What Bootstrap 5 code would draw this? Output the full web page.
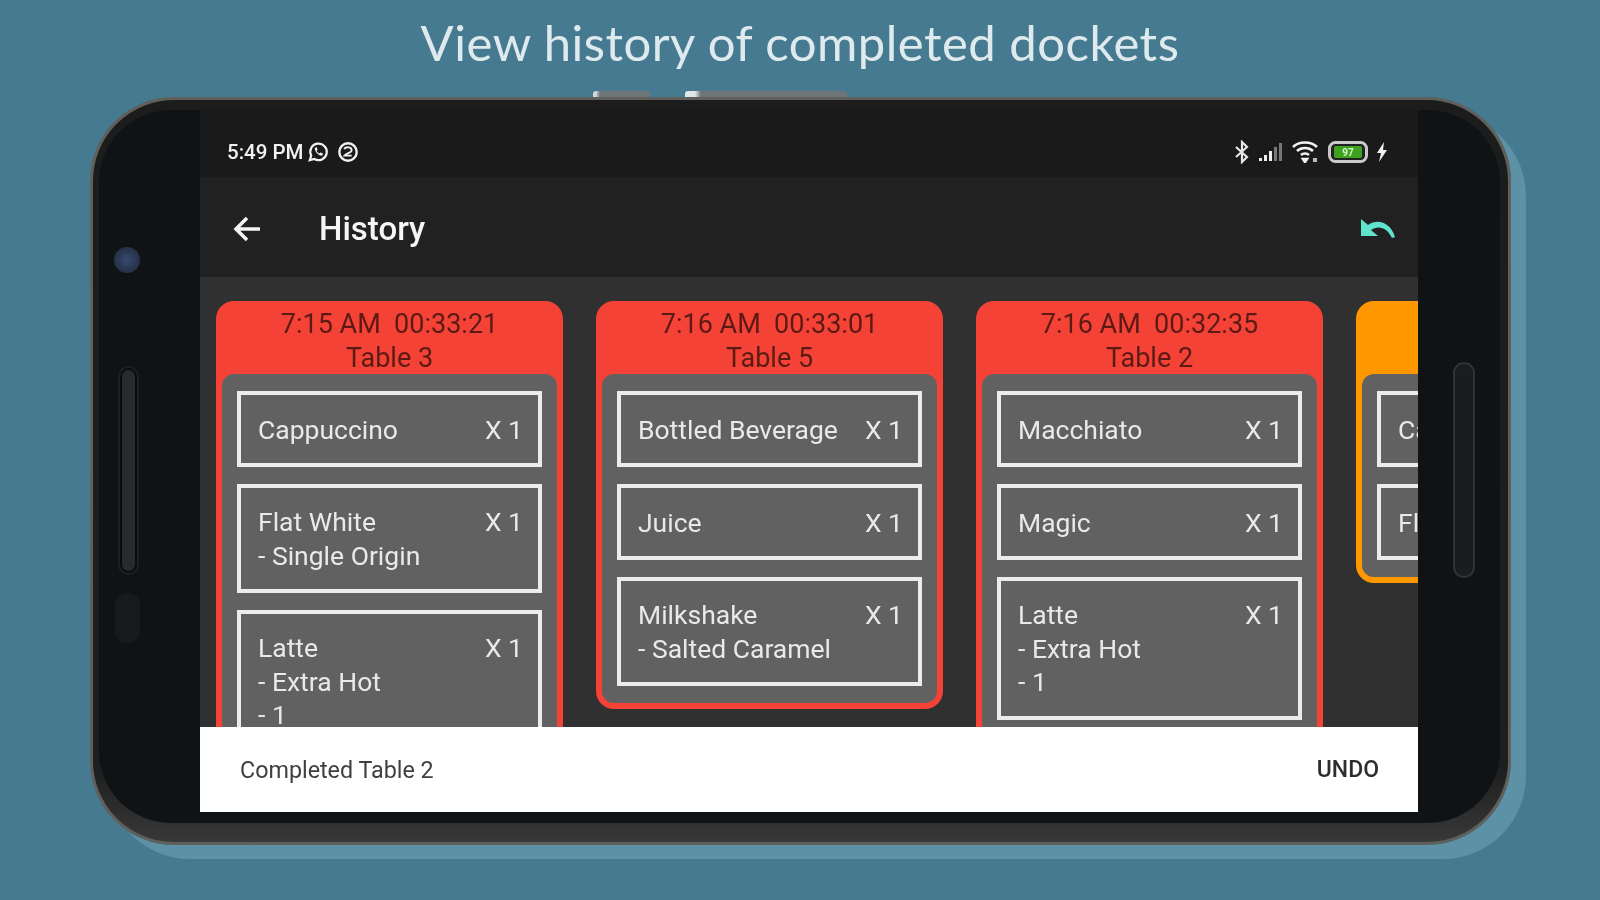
<!doctype html>
<html lang="en">
<head>
<meta charset="utf-8">
<title>History</title>
<link href="https://cdn.jsdelivr.net/npm/bootstrap@5.3.0/dist/css/bootstrap.min.css" rel="stylesheet">
<style>
html,body{height:100%}
body{background:#457a90;overflow:hidden;font-family:Roboto,"Liberation Sans",sans-serif}
.promo-title{height:85px;margin:0 0 12px;font-family:Lato,"Open Sans",sans-serif;font-weight:400;font-size:49px;letter-spacing:.5px;color:#dfeaee;line-height:85px;text-align:center;filter:blur(.5px)}
.phone{position:relative;width:1421px;height:748px;margin:0 0 0 90px;padding:10px 8px 19px 6px;border:3px solid #5f5f5c;border-radius:84px;background:linear-gradient(#1c1c1c,#1e1e1e 90%,#383838);box-shadow:16px 15px 0 -1px #5c91a6;filter:blur(.7px)}
.phone-inner{height:100%;padding:0 82px 11px 101px;border-radius:72px;background:#0f1315}
.screen{height:100%;overflow:hidden;background:#303030}
.status-bar{height:67px;padding:17px 30px 0 27px;background:#1a1a1a;color:#f2f2f2;font-size:20.500px;font-weight:500}
.app-bar{height:100px;padding:3px 21px 0 33px;background:#212121;color:#f5f5f5}
.app-title{margin-left:58px;font-size:33px;font-weight:500;line-height:1}
.board{min-height:0;padding:24px 0 0 16px;gap:33px;overflow:hidden}
.docket{flex:0 0 347px;padding:0 6px 6px;border-radius:18px;background:#f44336}
.docket-amber{background:#ff9800}
.docket-head{height:73px;padding-top:7px;color:#5c1a15;font-size:27px;line-height:33.500px;text-align:center}
.docket-body{padding:17px 15px 17px;border-radius:12px;background:#616161;gap:17px}
.ticket{flex:none;padding:17px 15px 17px 17px;border:4px solid #ececec;background:#616161;color:#e9e9e9;font-size:26.500px;line-height:33.500px}
.ticket-one{height:76px;padding-top:1px;padding-bottom:0}
.ticket-cut{flex:none;height:300px}
.snack{height:85px;padding:2px 39px 0 40px;background:#fff;color:#3f3f3f;font-size:23.300px}
.snack-action{color:#2e2e2e;font-size:23px;font-weight:500}
.cam{position:absolute;left:21px;top:147px;width:26px;height:26px;border-radius:50%;background:radial-gradient(#37496f,#1c2636)}
.speaker{position:absolute;border-radius:11px}
.speaker-l{left:27px;top:268px;width:17px;height:205px;border:2px solid #0a0c0d;background:#2a2a2c;box-shadow:0 0 0 2px #1d2021}
.speaker-r{right:33px;top:262px;width:22px;height:216px;border:2px solid #2e3234;background:#1a1d1f}
.sensor{position:absolute;left:22px;top:493px;width:25px;height:50px;border-radius:12px;background:#161a1c}
.hw-btn{position:absolute;top:-9px;height:6px;border-radius:3px 3px 0 0;background:#6d7577}
.hw-a{left:500px;width:57px;background:linear-gradient(90deg,#cfd9db 0 3px,#6d7577 7px)}
.hw-b{left:592px;width:162px;background:linear-gradient(90deg,#dfe7e8 0 10px,#6d7577 16px)}
</style>
</head>
<body>
<h1 class="promo-title">View history of completed dockets</h1>
<div class="phone">
  <span class="hw-btn hw-a"></span>
  <span class="hw-btn hw-b"></span>
  <span class="cam"></span>
  <span class="speaker speaker-l"></span>
  <span class="sensor"></span>
  <span class="speaker speaker-r"></span>
  <div class="phone-inner">
    <div class="screen d-flex flex-column">
      <div class="status-bar d-flex align-items-center justify-content-between flex-shrink-0">
        <div class="d-flex align-items-center gap-1">
          <span>5:49 PM</span>
          <svg width="22" height="22" viewBox="0 0 24 24" fill="none" stroke="#f2f2f2" stroke-width="2.400"><path d="M3 21l1.600-5A9 9 0 1 1 8 19.600z"/><path d="M8.500 7.500c0 4 3.500 8 8 8.500l1-2.500-3-1-1 1c-1.500-.7-2.500-2-3-3l1-1-1-3z" fill="#f2f2f2" stroke="none"/></svg>
          <svg class="ms-1" width="22" height="22" viewBox="0 0 24 24" fill="none" stroke="#f2f2f2" stroke-width="2.600"><circle cx="12" cy="12" r="9.500"/><path d="M8 9c1-3 8-3 8 1 0 3-6 3-8 6h8" stroke-width="2"/></svg>
        </div>
        <div class="d-flex align-items-center gap-2">
          <svg width="16" height="24" viewBox="0 0 16 24" fill="none" stroke="#e6e6e6" stroke-width="2.200"><path d="M2 7l11 10-5 5V2l5 5L2 17"/></svg>
          <svg width="26" height="20" viewBox="0 0 26 20"><path d="M1 19h3v-3H1zM6 19h3v-6H6zM11 19h3V9h-3z" fill="#eee"/><path d="M16 19h3V5h-3zM21 19h3V1h-3z" fill="#777"/></svg>
          <svg width="28" height="22" viewBox="0 0 28 22" fill="none" stroke="#f2f2f2" stroke-width="2.600"><path d="M1 6c6-6 18-6 24 0M5 10c4-4 12-4 16 0M9 14c2-2 6-2 8 0"/><path d="M13 21l-2-3h4z" fill="#f2f2f2"/><rect x="21" y="17" width="4" height="4" fill="#bbb" stroke="none"/></svg>
          <svg width="40" height="22" viewBox="0 0 40 22"><rect x="1.500" y="1.500" width="37" height="19" rx="6" fill="#222" stroke="#c9c9c9" stroke-width="3"/><rect x="6" y="5" width="28" height="12" rx="2" fill="#3da31f"/><text x="20" y="15" font-size="10" font-weight="700" text-anchor="middle" fill="#d6f5c8" font-family="Roboto,sans-serif">97</text></svg>
          <svg width="12" height="20" viewBox="0 0 12 20" fill="#f2f2f2"><path d="M8 0L1 11h4l-2 9 8-12H7z"/></svg>
        </div>
      </div>
      <div class="app-bar d-flex align-items-center flex-shrink-0">
        <svg width="28" height="28" viewBox="0 0 28 28" fill="none" stroke="#f5f5f5" stroke-width="3.500"><path d="M27 14H3M14 3L3 14l11 11"/></svg>
        <span class="app-title">History</span>
        <svg class="ms-auto" width="38" height="24" viewBox="0 0 38 24" fill="#5fe3cd"><path d="M2 2v17h17l-7-6c7-5 16-3 21 8l3-1C32 6 19 1 9 8z"/></svg>
      </div>
      <div class="board d-flex align-items-start flex-grow-1">
        <div class="docket">
          <div class="docket-head">7:15 AM&nbsp; 00:33:21<br>Table 3</div>
          <div class="docket-body d-flex flex-column">
            <div class="ticket ticket-one d-flex justify-content-between align-items-center"><span>Cappuccino</span><span>X 1</span></div>
            <div class="ticket d-flex justify-content-between"><span>Flat White<br>- Single Origin</span><span>X 1</span></div>
            <div class="ticket ticket-cut d-flex justify-content-between"><span>Latte<br>- Extra Hot<br>- 1</span><span>X 1</span></div>
          </div>
        </div>
        <div class="docket">
          <div class="docket-head">7:16 AM&nbsp; 00:33:01<br>Table 5</div>
          <div class="docket-body d-flex flex-column">
            <div class="ticket ticket-one d-flex justify-content-between align-items-center"><span>Bottled Beverage</span><span>X 1</span></div>
            <div class="ticket ticket-one d-flex justify-content-between align-items-center"><span>Juice</span><span>X 1</span></div>
            <div class="ticket d-flex justify-content-between"><span>Milkshake<br>- Salted Caramel</span><span>X 1</span></div>
          </div>
        </div>
        <div class="docket">
          <div class="docket-head">7:16 AM&nbsp; 00:32:35<br>Table 2</div>
          <div class="docket-body d-flex flex-column">
            <div class="ticket ticket-one d-flex justify-content-between align-items-center"><span>Macchiato</span><span>X 1</span></div>
            <div class="ticket ticket-one d-flex justify-content-between align-items-center"><span>Magic</span><span>X 1</span></div>
            <div class="ticket d-flex justify-content-between"><span>Latte<br>- Extra Hot<br>- 1</span><span>X 1</span></div>
            <div class="ticket-cut"></div>
          </div>
        </div>
        <div class="docket docket-amber">
          <div class="docket-head"></div>
          <div class="docket-body d-flex flex-column">
            <div class="ticket ticket-one d-flex align-items-center"><span>Cappuccino</span></div>
            <div class="ticket ticket-one d-flex align-items-center"><span>Flat White</span></div>
          </div>
        </div>
      </div>
      <div class="snack d-flex align-items-center justify-content-between flex-shrink-0">
        <span>Completed Table 2</span>
        <span class="snack-action">UNDO</span>
      </div>
    </div>
  </div>
</div>
<script src="https://cdn.jsdelivr.net/npm/bootstrap@5.3.0/dist/js/bootstrap.bundle.min.js"></script>
</body>
</html>
